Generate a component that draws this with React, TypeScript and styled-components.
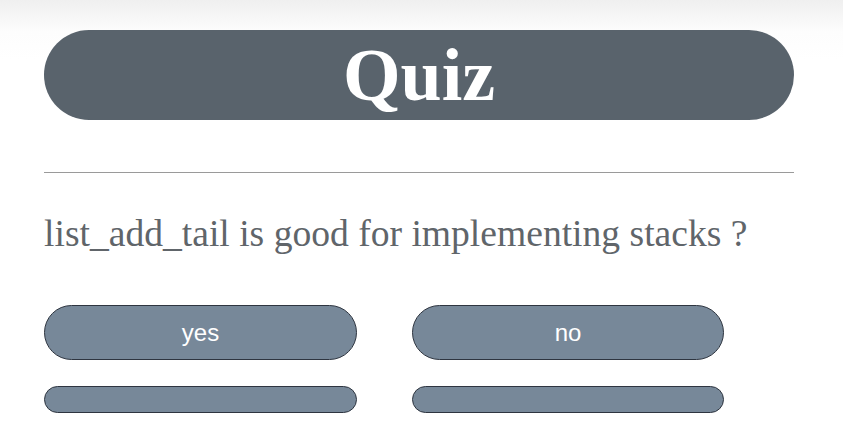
import React from 'react';
import styled, { createGlobalStyle } from 'styled-components';

const HEADER_BG = '#59636c';
const BUTTON_BG = '#778899';

const GlobalStyle = createGlobalStyle`
  html, body {
    margin: 0;
    padding: 0;
  }
  body {
    background: linear-gradient(to bottom, #efefef 0px, #fdfdfd 32px, #ffffff 60px);
    min-height: 445px;
    font-family: "Liberation Serif", "Times New Roman", serif;
  }
`;

const Page = styled.div`
  width: 750px;
  padding: 30px 0 0 44px;
`;

const Header = styled.h1`
  margin: 0;
  height: 90px;
  border-radius: 45px;
  background: ${HEADER_BG};
  color: #ffffff;
  font-family: "Liberation Serif", "Times New Roman", serif;
  font-weight: bold;
  font-size: 74px;
  line-height: 90px;
  text-align: center;
`;

const Divider = styled.hr`
  margin: 52px 0 0;
  border: none;
  border-top: 1px solid #9a9a9a;
  height: 0;
`;

const Question = styled.p`
  margin: 36px 0 0;
  font-size: 37.6px;
  line-height: 50px;
  color: #60656a;
`;

const Answers = styled.div`
  display: grid;
  grid-template-columns: 313px 312px;
  column-gap: 55px;
  row-gap: 26px;
  margin-top: 46px;
`;

const Answer = styled.button<{ $small?: boolean }>`
  box-sizing: border-box;
  height: ${p => (p.$small ? 27 : 55)}px;
  border-radius: ${p => (p.$small ? 14 : 28)}px;
  border: 1px solid #2e3540;
  background: ${BUTTON_BG};
  color: #ffffff;
  font-family: "Liberation Sans", Arial, sans-serif;
  font-size: 24px;
  padding: 0;
  cursor: pointer;
`;

export default function App() {
  return (
    <>
      <GlobalStyle />
      <Page>
        <Header>Quiz</Header>
        <Divider />
        <Question>list_add_tail is good for implementing stacks ?</Question>
        <Answers>
          <Answer>yes</Answer>
          <Answer>no</Answer>
          <Answer $small />
          <Answer $small />
        </Answers>
      </Page>
    </>
  );
}
